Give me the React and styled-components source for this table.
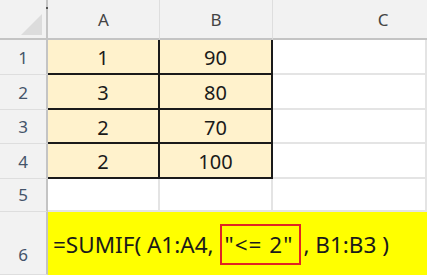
import React from "react";
import styled, { createGlobalStyle } from "styled-components";

const GlobalStyle = createGlobalStyle`
  html, body {
    margin: 0;
    padding: 0;
    background: #ffffff;
    overflow: hidden;
  }
  body {
    font-family: "Noto Sans", "Open Sans", "Liberation Sans", sans-serif;
  }
`;

const rows = [
  { n: 1, a: "1", b: "90" },
  { n: 2, a: "3", b: "80" },
  { n: 3, a: "2", b: "70" },
  { n: 4, a: "2", b: "100" },
];

const App = () => {
  return (
    <>
      <GlobalStyle />
      <Sheet>
        <Corner>
          <CornerTriangle />
        </Corner>
        <ColHead>A</ColHead>
        <ColHead>B</ColHead>
        <ColHead $last>C</ColHead>

        {rows.map((r) => (
          <React.Fragment key={r.n}>
            <RowHead>{r.n}</RowHead>
            <Cell $data>{r.a}</Cell>
            <Cell $data>{r.b}</Cell>
            <Cell />
          </React.Fragment>
        ))}

        <RowHead>5</RowHead>
        <Cell />
        <Cell />
        <Cell />

        <RowHead $tall>6</RowHead>
        <FormulaCell>
          =SUMIF( A1:A4,<Criteria>"&lt;= 2"</Criteria>, B1:B3 )
        </FormulaCell>
      </Sheet>
    </>
  );
};

const Sheet = styled.div`
  display: grid;
  grid-template-columns: 48px 112px 113px 1fr;
  grid-template-rows: 40px 35px 35px 34px 35px 33px 63px;
  width: 100%;
  overflow: hidden;
`;

const Corner = styled.div`
  position: relative;
  box-sizing: border-box;
  background: #f2f2f2;
  border-right: 2px solid #c4c4c4;
  border-bottom: 2px solid #c4c4c4;
  &::after {
    content: "";
    position: absolute;
    right: -2px;
    top: 7px;
    width: 2px;
    height: 2px;
    background: #555555;
  }
`;

const CornerTriangle = styled.div`
  position: absolute;
  left: 21px;
  top: 14px;
  width: 0;
  height: 0;
  border-left: 21px solid transparent;
  border-bottom: 21px solid #dcdcdc;
`;

const ColHead = styled.div`
  box-sizing: border-box;
  display: flex;
  align-items: center;
  justify-content: center;
  background: #f2f2f2;
  border-right: ${(p) => (p.$last ? "none" : "1px solid #dedede")};
  border-bottom: 2px solid #c4c4c4;
  color: #444444;
  font-size: 17px;
  padding-top: 1px;
  padding-left: ${(p) => (p.$last ? "66px" : "0")};
`;

const RowHead = styled.div`
  box-sizing: border-box;
  display: flex;
  align-items: flex-end;
  justify-content: center;
  background: #f2f2f2;
  border-right: 2px solid #c4c4c4;
  border-bottom: 1px solid #dedede;
  color: #44546a;
  font-size: 17px;
  line-height: 20px;
  padding-bottom: ${(p) => (p.$tall ? "9px" : "6px")};
`;

const Cell = styled.div`
  box-sizing: border-box;
  display: flex;
  align-items: center;
  justify-content: center;
  background: ${(p) => (p.$data ? "#fff2cc" : "#ffffff")};
  border-right: 2px solid ${(p) => (p.$data ? "#1a1a1a" : "#e4e4e4")};
  border-bottom: 2px solid ${(p) => (p.$data ? "#1a1a1a" : "#e4e4e4")};
  color: #1a1a1a;
  font-size: 20px;
  padding-top: 2px;
`;

const FormulaCell = styled.div`
  grid-column: 2 / span 3;
  display: flex;
  align-items: center;
  background: #ffff00;
  color: #1a1a1a;
  font-size: 22.5px;
  white-space: pre;
  padding-left: 5px;
  padding-top: 1px;
`;

const Criteria = styled.span`
  display: inline-block;
  border: 2px solid #e02424;
  padding: 5px 6px 5px 3px;
  margin-left: 6px;
  margin-right: 2px;
  line-height: 27px;
  letter-spacing: 1px;
`;

export default App;
